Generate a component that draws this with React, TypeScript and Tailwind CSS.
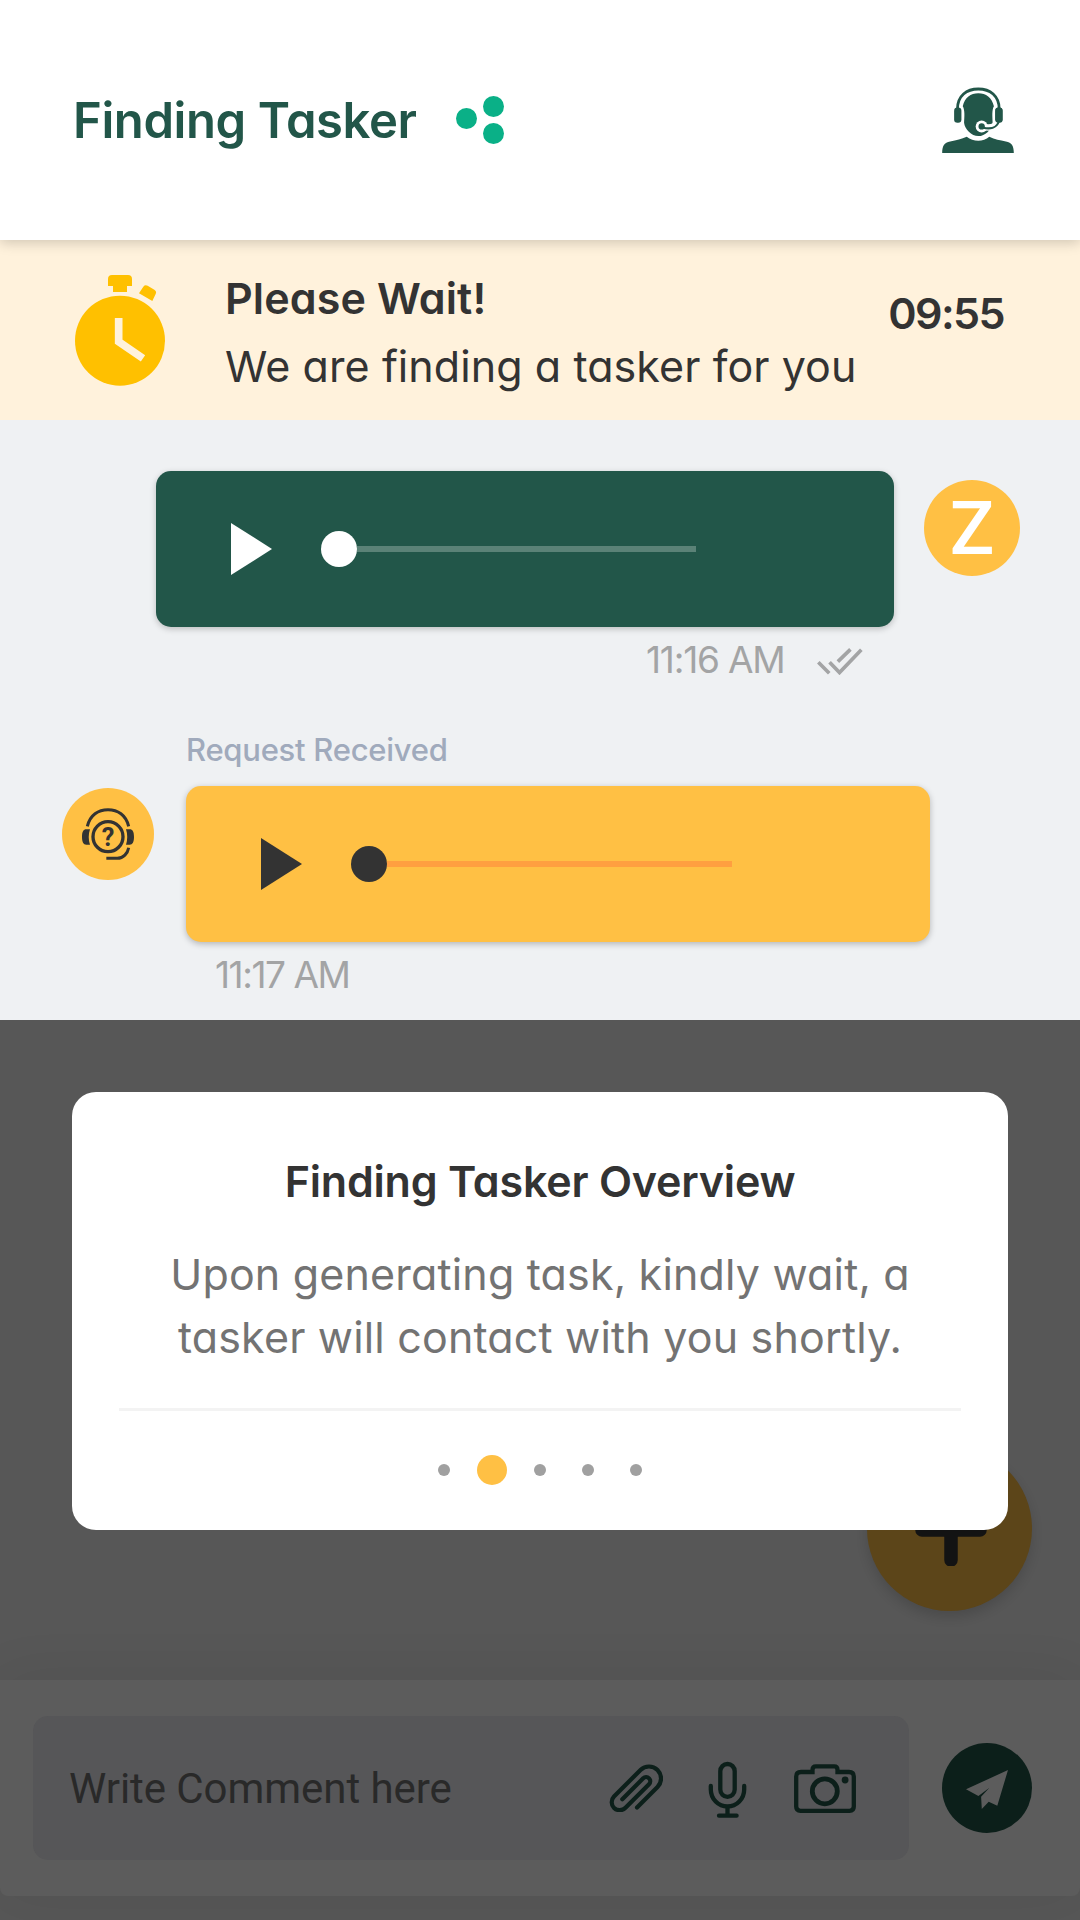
import React from 'react';

const sans = "font-['Inter',sans-serif] [font-feature-settings:'cv11'] whitespace-nowrap";

function AgentIcon() {
  return (
    <svg viewBox="126 80 216 199" className="w-[72px] h-[66px]" fill="#225649">
      <path d="M172 147 C172 106 200 86 235 86 S298 106 298 147" fill="none" stroke="#225649" strokeWidth="8.5" />
      <rect x="162" y="142" width="22" height="46" rx="10" />
      <rect x="286" y="142" width="22" height="46" rx="10" />
      <path d="M188 138 C194 112 212 99 235 99 S276 112 282 138 C275 150 278 170 278 186 C274 210 256 228 235 228 S194 208 192 188 C193 170 195 150 188 138Z" />
      <path d="M245 199 C268 205 288 202 296 184" fill="none" stroke="#fff" strokeWidth="20" />
      <circle cx="245" cy="199" r="18" fill="#fff" />
      <rect x="286" y="142" width="22" height="46" rx="10" />
      <path d="M248 202 C270 208 290 204 297 184" fill="none" stroke="#225649" strokeWidth="6.5" />
      <circle cx="245" cy="199" r="9.5" />
      <path d="M126 279 C126 257 132 248 150 244 C170 240 184 237 200 230 C220 246 250 246 268 230 C285 238 300 241 318 244 C336 248 342 257 342 279Z" />
    </svg>
  );
}

function Stopwatch() {
  return (
    <svg viewBox="105 105 270 333" className="w-[90px] h-[111px]" fill="#FFC000">
      <circle cx="240" cy="302" r="135" />
      <path d="M204 138 V117 Q204 105 216 105 H264 Q276 105 276 117 V138 H261 V156 H219 V138Z" />
      <path d="M297 160 L310 140 Q315 133 323 137 L343 149 Q351 154 347 162 L337 183Z" />
      <path d="M236 234 V305 L309 355" fill="none" stroke="#FFF2DC" strokeWidth="23" />
    </svg>
  );
}

function DoubleTick() {
  return (
    <svg viewBox="591 594 139 81" className="w-[46px] h-[27px]" fill="none" stroke="#A3A4A5" strokeWidth="11">
      <path d="M595 637 L628 670 M629 637 L659 668 L725 599 M654 635 L692 598" />
    </svg>
  );
}

function SupportIcon() {
  return (
    <svg viewBox="126 264 156 156" className="w-[52px] h-[52px]" fill="none" stroke="#333">
      <path d="M142 319 C150 285 175 269 204 269 S258 285 266 319" strokeWidth="9" />
      <circle cx="204" cy="350" r="45" strokeWidth="10" />
      <g fill="#333" stroke="none">
        <path d="M139 328 H150 C145 343 145 360 150 374 H139 C130 374 126 366 126 351 S130 328 139 328Z" />
        <path d="M269 328 H258 C263 343 263 360 258 374 H269 C278 374 282 366 282 351 S278 328 269 328Z" />
        <text x="204" y="378" textAnchor="middle" fontFamily="Roboto" fontWeight="700" fontSize="76">?</text>
      </g>
      <path d="M199 415 H232 C250 415 263 400 266 383" strokeWidth="9" />
    </svg>
  );
}

function Paperclip() {
  return (
    <svg viewBox="0 0 54 48" className="w-[54px] h-[48px]" fill="none" stroke="#0C1F1A" strokeWidth="4.2" strokeLinecap="round">
      <path d="M28 43.5 L48.5 23 A12 12 0 0 0 31.5 6 L5 32.5 A8 8 0 0 0 16.5 43.8 L40 20.2 A4 4 0 0 0 34.2 14.3 L13.3 35.2" />
    </svg>
  );
}

function Mic() {
  return (
    <svg viewBox="0 0 39 58" className="w-[39px] h-[58px]" fill="none" stroke="#0C1F1A" strokeWidth="4.3" strokeLinecap="round">
      <rect x="12.3" y="3" width="14.4" height="32.8" rx="7.2" />
      <path d="M2.8 25 V28.5 A16.7 17 0 0 0 36.2 28.5 V25 M19.5 46 V54 M11 54.7 H28.6" />
    </svg>
  );
}

function Camera() {
  return (
    <svg viewBox="0 0 62 49" className="w-[62px] h-[49px]" fill="none" stroke="#0C1F1A" strokeWidth="4.3">
      <path d="M7 8 H18.5 V6 Q18.5 2.4 22 2.4 H40.2 Q43.5 2.4 43.5 6 V8 H55 Q59.8 8 59.8 12.5 V42.5 Q59.8 46.8 55.5 46.8 H6.5 Q2.2 46.8 2.2 42.5 V12.5 Q2.2 8 7 8Z" />
      <circle cx="30.8" cy="27.3" r="12.5" strokeWidth="4.8" />
      <circle cx="51.1" cy="16" r="3.4" fill="#0C1F1A" stroke="none" />
    </svg>
  );
}

function Plane() {
  return (
    <svg viewBox="966 1770 42 39" className="w-[42px] h-[39px]" fill="#5C5C5C">
      <path d="M966 1789.3 L1008 1770 L997.3 1805.7 L988.7 1801.7 L981.8 1809 L981.1 1796.7 L989.4 1787.7 L978.4 1796Z" />
    </svg>
  );
}

function Player({ color, track, length }: { color: string; track: string; length: number }) {
  return (
    <>
      <svg viewBox="0 0 41 52" className="w-[41px] h-[52px]" fill={color}>
        <path d="M0 0 L41 26 L0 52Z" />
      </svg>
      <div className="ml-[49px] flex items-center">
        <div className="size-9 rounded-full" style={{ background: color }} />
        <div className="h-[6px]" style={{ background: track, width: length }} />
      </div>
    </>
  );
}

export default function App() {
  return (
    <div className="flex h-[1920px] w-[1080px] flex-col overflow-hidden bg-[#EFF1F3]">
      <header className="relative z-10 flex h-[240px] items-center bg-white pl-[73px] pr-[66px] shadow-[0_3px_12px_rgba(0,0,0,0.18)]">
        <h1 className={`${sans} mt-[2px] w-[344px] text-[49px] font-semibold tracking-[-0.4px] text-[#225649]`}>Finding Tasker</h1>
        <svg viewBox="0 0 48 48" className="ml-[39px] size-12" fill="#0AB087">
          <circle cx="10.5" cy="22.5" r="10.5" />
          <circle cx="37.5" cy="10.5" r="10.5" />
          <circle cx="37.5" cy="37.5" r="10.5" />
        </svg>
        <div className="ml-auto"><AgentIcon /></div>
      </header>

      <section className="flex h-[180px] bg-[#FFF2DC] pl-[75px] pr-[76px] pt-[35px] text-[#333]">
        <Stopwatch />
        <div className={`${sans} ml-[60px] -mt-[11px] text-[43px] leading-[68px]`}>
          <div className="font-semibold tracking-[0.12px]">Please Wait!</div>
          <div className="tracking-[0.08px]">We are finding a tasker for you</div>
        </div>
        <div className={`${sans} ml-auto mt-[4px] text-[43px] leading-[68px] font-semibold tracking-[-1.6px]`}>09:55</div>
      </section>

      <main className="h-[600px] pt-[51px]">
        <div className="flex pl-[156px]">
          <div className="flex h-[156px] w-[738px] items-center rounded-[15px] bg-[#225649] pl-[75px] shadow-[0_2px_6px_rgba(0,0,0,0.22)]">
            <Player color="#FFFFFF" track="#5B8277" length={339} />
          </div>
          <div className="ml-[30px] mt-[9px] flex size-24 items-center justify-center rounded-full bg-[#FFC044] pt-[2px] font-['Roboto',sans-serif] text-[74px] font-medium leading-none text-white">Z</div>
        </div>
        <div className="flex h-[65px] items-center pl-[646px]">
          <span className={`${sans} mt-px w-[171px] text-[37px] tracking-[-1.2px] text-[#A3A4A5]`}>11:16 AM</span>
          <div className="mt-[4px]"><DoubleTick /></div>
        </div>
        <div className={`${sans} mt-[37px] h-[57px] pl-[186px] text-[31px] leading-[42px] font-medium tracking-[-0.26px] text-[#A0AABC]`}>Request Received</div>
        <div className="flex pl-[62px]">
          <div className="mt-[2px] flex size-[92px] items-center justify-center rounded-full bg-[#FFC044]"><SupportIcon /></div>
          <div className="ml-8 flex h-[156px] w-[744px] items-center rounded-[15px] bg-[#FFC044] pl-[75px] shadow-[0_2px_6px_rgba(0,0,0,0.25)]">
            <Player color="#333333" track="#FF9F40" length={345} />
          </div>
        </div>
        <div className={`${sans} pl-[215px] text-[37px] leading-[65px] tracking-[-1.45px] text-[#A3A4A5]`}>11:17 AM</div>
      </main>

      <section className="relative isolate flex h-[900px] flex-col overflow-hidden bg-[#575757] pt-[72px]">
        <div className="absolute left-[867px] top-[426px] -z-10 flex size-[165px] items-center justify-center rounded-full bg-[#5C4519] shadow-[0_6px_12px_rgba(0,0,0,0.14)]">
          <svg viewBox="0 0 72 74" className="ml-[2px] w-[72px] h-[74px]" stroke="#131313" strokeWidth="13.5" strokeLinecap="round">
            <path d="M7 38 H65 M36 7 V68" />
          </svg>
        </div>
        <div className="mx-[72px] flex h-[438px] flex-col items-center rounded-[24px] bg-white">
          <h2 className={`${sans} mt-[55px] text-[43px] leading-[68px] font-semibold tracking-[-0.2px] text-[#333]`}>Finding Tasker Overview</h2>
          <p className={`${sans} mt-[28px] text-center text-[43px] leading-[63px] tracking-[0.18px] text-[#737373]`}>
            Upon generating task, kindly wait, a<br />tasker will contact with you shortly.
          </p>
          <div className="mt-[39px] h-[3px] w-[842px] bg-[#F3F3F3]" />
          <div className="mt-[44px] flex items-center">
            <div className="size-3 rounded-full bg-[#A0A0A0]" />
            <div className="mx-[27px] size-[30px] rounded-full bg-[#FFC044]" />
            <div className="size-3 rounded-full bg-[#A0A0A0]" />
            <div className="mx-9 size-3 rounded-full bg-[#A0A0A0]" />
            <div className="size-3 rounded-full bg-[#A0A0A0]" />
          </div>
        </div>
        <div className="mt-[150px] flex h-[216px] items-center rounded-b-[8px] bg-[#5C5C5C] pl-[33px] shadow-[0_0_60px_rgba(0,0,0,0.07)]">
          <div className="flex h-[144px] w-[876px] items-center rounded-[15px] bg-[#565658] pl-[36px]">
            <span className="w-[540px] font-['Roboto',sans-serif] text-[42px] tracking-[-0.06px] text-[#292929]">Write Comment here</span>
            <Paperclip />
            <div className="ml-[45px] mt-[3px]"><Mic /></div>
            <div className="ml-[47px]"><Camera /></div>
          </div>
          <div className="ml-[33px] flex size-[90px] items-center justify-center rounded-full bg-[#0C1F1A]">
            <div className="mt-[2px]"><Plane /></div>
          </div>
        </div>
      </section>
    </div>
  );
}
